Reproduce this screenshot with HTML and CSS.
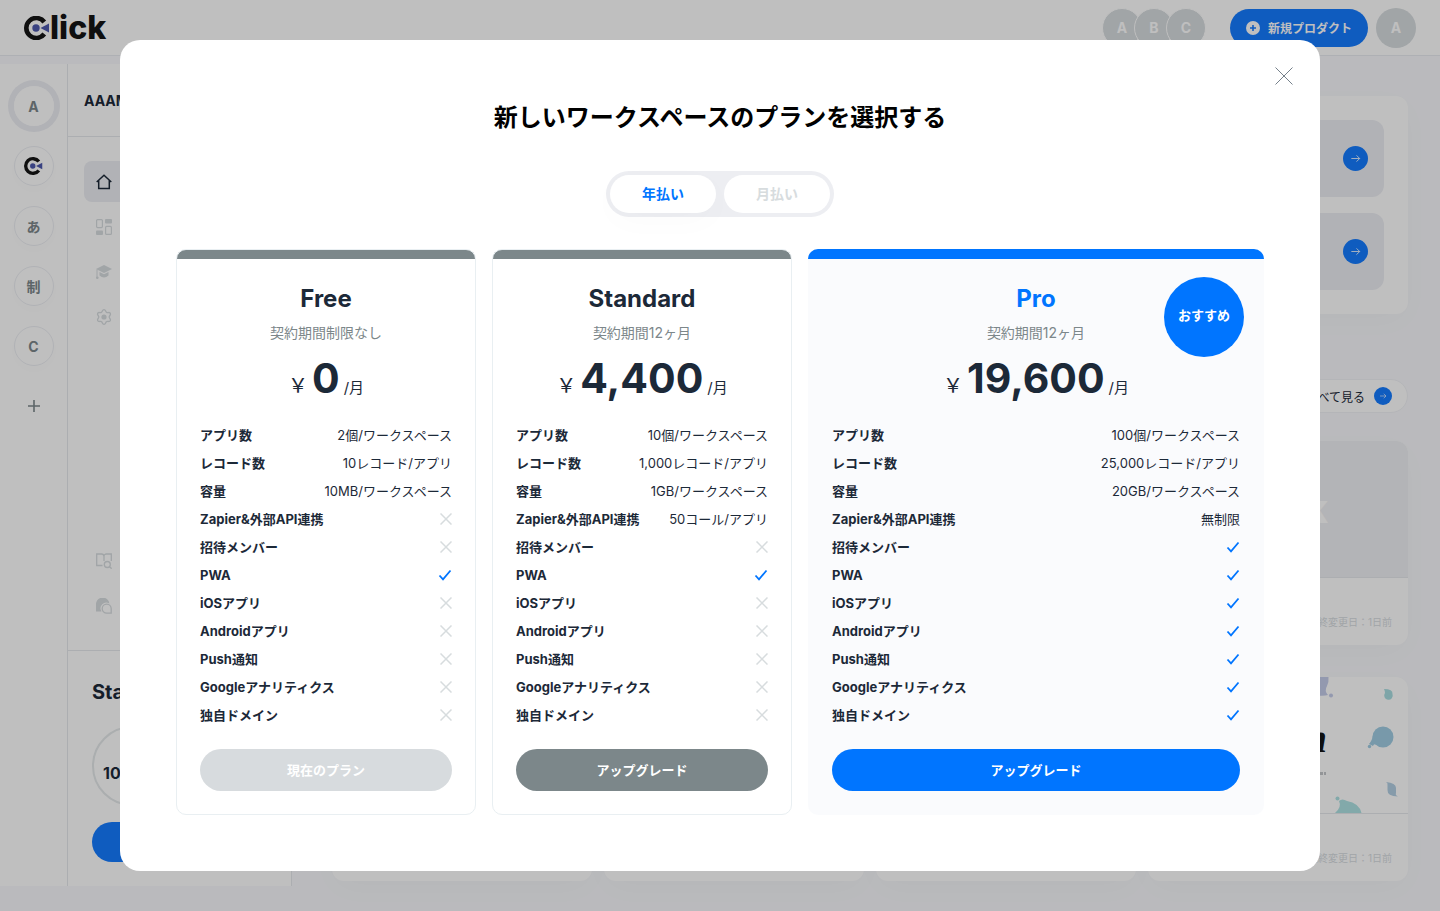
FILE: index.html
```html
<!DOCTYPE html>
<html lang="ja">

<head>
  <meta charset="UTF-8">
  <meta name="viewport" content="width=device-width, initial-scale=1.0">
  <title>Click</title>
  <link rel="stylesheet" href="styles.css">
</head>

<body>
  <!-- shared icons -->
  <svg class="sprite" aria-hidden="true">
    <symbol id="mark" viewBox="0 0 26 24">
      <path d="M20.3 6A10 10 0 1 0 20.3 18" fill="none" stroke="#141414" stroke-width="4.6"/>
      <circle cx="12" cy="12" r="3.7" fill="#4d58ad"/>
      <path d="M16.500 12L25 7.500V16.500Z" fill="#4d58ad"/>
    </symbol>
    <symbol id="arrow" viewBox="0 0 24 24">
      <path d="M8 12h8M13 9l3 3L13 15" fill="none" stroke="#fff" stroke-width=".8"/>
    </symbol>
    <symbol id="cross" viewBox="0 0 12 12">
      <path d="M.5.5l11 11M11.500.5l-11 11" fill="none" stroke="#d7dcde" stroke-width="1.5"/>
    </symbol>
    <symbol id="check" viewBox="0 0 14 12">
      <path d="M1.500 6.500L5 10.300 12.500 1.500" fill="none" stroke="#0075ff" stroke-width="1.8"/>
    </symbol>
  </svg>

  <div class="app">
    <header class="header">
      <a href="#" class="logo" aria-label="Click"><svg class="logo-mark"><use href="#mark"/></svg><span>lick</span></a>
      <div class="members">
        <span class="member">A</span>
        <span class="member">B</span>
        <span class="member">C</span>
      </div>
      <button type="button" class="new-product">
        <svg width="14" height="14" viewBox="0 0 14 14"><circle cx="7" cy="7" r="7" fill="#fff"/><path d="M7 4v6M4 7h6" stroke="#147bff" stroke-width="1.6"/></svg>
        新規プロダクト
      </button>
      <button type="button" class="account">A</button>
    </header>

    <div class="shell">
      <nav class="workspaces">
        <a href="#" class="workspace active">A</a>
        <a href="#" class="workspace" aria-label="Click"><svg width="19" height="18"><use href="#mark"/></svg></a>
        <a href="#" class="workspace">あ</a>
        <a href="#" class="workspace">制</a>
        <a href="#" class="workspace">C</a>
        <button type="button" class="workspace-add" aria-label="追加"><svg width="12" height="12" viewBox="0 0 12 12"><path d="M6 0v12M0 6h12" stroke="#7c878b" stroke-width="1.600"/></svg></button>
      </nav>

      <aside class="sidebar">
        <div class="sidebar-name">AAAM</div>
        <nav class="menu">
          <a href="#" class="menu-item active" aria-label="ホーム">
            <svg viewBox="0 0 16 16"><path d="M.7 8L8 1.300 15.300 8M2.700 6.500V14.600H13.300V6.500" fill="none" stroke="#1c2938" stroke-width="1.500"/></svg>
          </a>
          <a href="#" class="menu-item" aria-label="テンプレート">
            <svg viewBox="0 0 16 16" fill="#d7dcdf"><rect x=".6" y=".6" width="5.800" height="8" rx="1" fill="none" stroke="#d7dcdf" stroke-width="1.200"/><rect x="9" width="7" height="4.500" rx="1"/><rect x="9.600" y="7.400" width="5.800" height="8" rx="1" fill="none" stroke="#d7dcdf" stroke-width="1.200"/><rect y="11.500" width="7" height="4.500" rx="1"/></svg>
          </a>
          <a href="#" class="menu-item" aria-label="学習">
            <svg viewBox="0 0 16 16" fill="#d7dcdf"><path d="M8 1L16 5 8 9 0 5Z"/><path d="M3.500 8L8 10.200 12.500 8V11.500Q8 15.500 3.500 11.500Z"/><path d="M1 5.500V14" stroke="#d7dcdf"/><circle cx="1.300" cy="13.800" r="1.300"/></svg>
          </a>
          <a href="#" class="menu-item" aria-label="設定">
            <svg viewBox="0 0 16 16"><path d="M8 .7C9.800.7 9.400 2.800 10.600 3.400 11.800 4.100 13.400 2.700 14.300 4.300 15.200 5.900 13.200 6.600 13.200 8S15.200 10.100 14.300 11.700C13.400 13.300 11.800 11.900 10.600 12.600 9.400 13.200 9.800 15.300 8 15.300S6.600 13.200 5.400 12.600C4.200 11.900 2.600 13.300 1.700 11.700.8 10.100 2.800 9.400 2.800 8S.8 5.900 1.700 4.300C2.600 2.700 4.200 4.100 5.400 3.400 6.600 2.800 6.200.7 8 .7Z" fill="none" stroke="#d7dcdf" stroke-width="1.300"/><circle cx="8" cy="8" r="2.600" fill="#d7dcdf"/></svg>
          </a>
        </nav>
        <nav class="menu menu-help">
          <a href="#" class="menu-item" aria-label="マニュアル">
            <svg viewBox="0 0 16 16" fill="none" stroke="#d7dcdf" stroke-width="1.300"><path d="M6.500 12.500H.7V1H5.500Q8 1 8 3.500V8M8 3.500Q8 1 10.500 1H15.300V8"/><circle cx="11.300" cy="11.500" r="3"/><path d="M13.500 13.700L15.700 15.700"/></svg>
          </a>
          <a href="#" class="menu-item" aria-label="チャット">
            <svg viewBox="0 0 16 16"><path d="M0 13.500V7A6.700 6.700 0 0 1 13.400 5.600 5.700 5.700 0 0 0 5.500 13.500Z" fill="#d7dcdf"/><path d="M10.700 6.200A4.500 4.500 0 0 1 15.200 10.700V15.200H10.700A4.500 4.500 0 0 1 10.700 6.200Z" fill="none" stroke="#d7dcdf" stroke-width="1.300"/></svg>
          </a>
        </nav>
        <div class="usage">
          <div class="usage-plan">Standard</div>
          <div class="usage-ring">10</div>
          <button type="button" class="usage-button" aria-label="アップグレード"></button>
        </div>
      </aside>

      <main class="main">
        <section class="guide">
          <a href="#" class="guide-item" aria-label="ガイド"><svg class="dot"><use href="#arrow"/></svg></a>
          <a href="#" class="guide-item" aria-label="ガイド"><svg class="dot"><use href="#arrow"/></svg></a>
        </section>
        <a href="#" class="see-all">すべて見る<svg class="dot dot-small"><use href="#arrow"/></svg></a>
        <div class="products">
          <article class="product"></article>
          <article class="product"></article>
          <article class="product"></article>
          <article class="product">
            <div class="cover cover-gray">Click</div>
            <p>最終変更日：1日前</p>
          </article>
          <article class="product"></article>
          <article class="product"></article>
          <article class="product"></article>
          <article class="product">
            <div class="cover cover-art">
              <span class="art-name">n</span>
              <svg class="art" viewBox="0 0 260 136" aria-hidden="true">
                <path d="M160 0H180.500Q181 5 179 9 176 14 180 18 174 20 160 17Z" fill="#c5ccea"/>
                <circle cx="183" cy="18.500" r="2" fill="#c5ccea"/>
                <path d="M236 12Q245 12 244.500 17A4.300 4.300 0 1 1 237 16Q237 14 236 12Z" fill="#a9dde0"/>
                <circle cx="235" cy="60" r="10.500" fill="#a0cde3"/>
                <path d="M225 58Q224 64 221 67L225 69Q226 65 232 70Z" fill="#a0cde3"/>
                <circle cx="221.500" cy="69.500" r="1.700" fill="#a0cde3"/>
                <path d="M238 105Q248 106 248 111V116Q247 118 250 119.500 239 119 239.500 113V108Q240 106 238 105Z" fill="#b3cfe3"/>
                <path d="M187 136Q194 130 191 124 194 121 199 124 211 126 213.500 136Z" fill="#aee2e3"/>
                <circle cx="189.500" cy="121.500" r="2" fill="#aee2e3"/>
                <path d="M172 95v3M174 95v3M177 95v3" stroke="#8a8f96"/>
              </svg>
            </div>
            <p>最終変更日：1日前</p>
          </article>
        </div>
      </main>
    </div>
  </div>

  <div class="overlay">
    <div class="modal" role="dialog" aria-modal="true" aria-labelledby="modal-title">
      <button type="button" class="close" aria-label="閉じる">
        <svg width="18" height="18" viewBox="0 0 18 18"><path d="M.5.5l17 17M17.500.5l-17 17" stroke="#75808a" stroke-width="1"/></svg>
      </button>
      <h1 id="modal-title">新しいワークスペースのプランを選択する</h1>
      <div class="billing">
        <button type="button" class="selected" aria-pressed="true">年払い</button>
        <button type="button" aria-pressed="false">月払い</button>
      </div>

      <div class="plans">
        <section class="plan">
          <h2>Free</h2>
          <p class="term">契約期間制限なし</p>
          <p class="price"><span class="yen">￥</span><strong>0</strong><span class="per">/月</span></p>
          <table class="features">
            <tr><th scope="row">アプリ数</th><td>2個/ワークスペース</td></tr>
            <tr><th scope="row">レコード数</th><td>10レコード/アプリ</td></tr>
            <tr><th scope="row">容量</th><td>10MB/ワークスペース</td></tr>
            <tr><th scope="row">Zapier&amp;外部API連携</th><td><svg class="no"><use href="#cross"/></svg></td></tr>
            <tr><th scope="row">招待メンバー</th><td><svg class="no"><use href="#cross"/></svg></td></tr>
            <tr><th scope="row">PWA</th><td><svg class="yes"><use href="#check"/></svg></td></tr>
            <tr><th scope="row">iOSアプリ</th><td><svg class="no"><use href="#cross"/></svg></td></tr>
            <tr><th scope="row">Androidアプリ</th><td><svg class="no"><use href="#cross"/></svg></td></tr>
            <tr><th scope="row">Push通知</th><td><svg class="no"><use href="#cross"/></svg></td></tr>
            <tr><th scope="row">Googleアナリティクス</th><td><svg class="no"><use href="#cross"/></svg></td></tr>
            <tr><th scope="row">独自ドメイン</th><td><svg class="no"><use href="#cross"/></svg></td></tr>
          </table>
          <button type="button" class="plan-button" disabled>現在のプラン</button>
        </section>

        <section class="plan">
          <h2>Standard</h2>
          <p class="term">契約期間12ヶ月</p>
          <p class="price"><span class="yen">￥</span><strong>4,400</strong><span class="per">/月</span></p>
          <table class="features">
            <tr><th scope="row">アプリ数</th><td>10個/ワークスペース</td></tr>
            <tr><th scope="row">レコード数</th><td>1,000レコード/アプリ</td></tr>
            <tr><th scope="row">容量</th><td>1GB/ワークスペース</td></tr>
            <tr><th scope="row">Zapier&amp;外部API連携</th><td>50コール/アプリ</td></tr>
            <tr><th scope="row">招待メンバー</th><td><svg class="no"><use href="#cross"/></svg></td></tr>
            <tr><th scope="row">PWA</th><td><svg class="yes"><use href="#check"/></svg></td></tr>
            <tr><th scope="row">iOSアプリ</th><td><svg class="no"><use href="#cross"/></svg></td></tr>
            <tr><th scope="row">Androidアプリ</th><td><svg class="no"><use href="#cross"/></svg></td></tr>
            <tr><th scope="row">Push通知</th><td><svg class="no"><use href="#cross"/></svg></td></tr>
            <tr><th scope="row">Googleアナリティクス</th><td><svg class="no"><use href="#cross"/></svg></td></tr>
            <tr><th scope="row">独自ドメイン</th><td><svg class="no"><use href="#cross"/></svg></td></tr>
          </table>
          <button type="button" class="plan-button">アップグレード</button>
        </section>

        <section class="plan pro">
          <span class="badge">おすすめ</span>
          <h2>Pro</h2>
          <p class="term">契約期間12ヶ月</p>
          <p class="price"><span class="yen">￥</span><strong>19,600</strong><span class="per">/月</span></p>
          <table class="features">
            <tr><th scope="row">アプリ数</th><td>100個/ワークスペース</td></tr>
            <tr><th scope="row">レコード数</th><td>25,000レコード/アプリ</td></tr>
            <tr><th scope="row">容量</th><td>20GB/ワークスペース</td></tr>
            <tr><th scope="row">Zapier&amp;外部API連携</th><td>無制限</td></tr>
            <tr><th scope="row">招待メンバー</th><td><svg class="yes"><use href="#check"/></svg></td></tr>
            <tr><th scope="row">PWA</th><td><svg class="yes"><use href="#check"/></svg></td></tr>
            <tr><th scope="row">iOSアプリ</th><td><svg class="yes"><use href="#check"/></svg></td></tr>
            <tr><th scope="row">Androidアプリ</th><td><svg class="yes"><use href="#check"/></svg></td></tr>
            <tr><th scope="row">Push通知</th><td><svg class="yes"><use href="#check"/></svg></td></tr>
            <tr><th scope="row">Googleアナリティクス</th><td><svg class="yes"><use href="#check"/></svg></td></tr>
            <tr><th scope="row">独自ドメイン</th><td><svg class="yes"><use href="#check"/></svg></td></tr>
          </table>
          <button type="button" class="plan-button">アップグレード</button>
        </section>
      </div>
    </div>
  </div>
</body>

</html>
```
FILE: styles.css
```css
* {
  margin: 0;
  padding: 0;
  box-sizing: border-box;
}

body {
  background: #f8f9fc;
  color: #1c2938;
  font-family: Inter, "Noto Sans CJK JP", sans-serif;
  font-size: 13px;
}

button {
  border: 0;
  background: none;
  font: inherit;
  color: inherit;
  cursor: pointer;
}

a {
  color: inherit;
  text-decoration: none;
}

svg {
  display: block;
  flex: none;
}

.sprite {
  position: absolute;
  width: 0;
  height: 0;
}

/* page behind the dialog */
.app {
  display: flex;
  flex-direction: column;
  height: 100vh;
  overflow: hidden;
}

.header {
  display: flex;
  align-items: center;
  flex: none;
  height: 56px;
  padding: 0 24px;
  background: #fff;
  border-bottom: 1px solid #e9ebf0;
}

.logo {
  display: flex;
  align-items: center;
  margin-right: auto;
  color: #141414;
  font-size: 32px;
  line-height: 32px;
  font-weight: 800;
}

.logo-mark {
  width: 26px;
  height: 24px;
}

.members {
  display: flex;
  margin-right: 24px;
}

.member,
.account {
  display: flex;
  align-items: center;
  justify-content: center;
  border-radius: 50%;
  background: #d7dcdf;
  color: #fff;
  font-size: 14px;
  font-weight: 700;
}

.member {
  width: 40px;
  height: 40px;
  border: 1px solid #fff;
}

.member + .member {
  margin-left: -8px;
}

.new-product {
  display: flex;
  align-items: center;
  gap: 8px;
  height: 38px;
  padding: 0 16px;
  margin-right: 8px;
  border-radius: 19px;
  background: #147bff;
  color: #fff;
  font-size: 12px;
  font-weight: 700;
}

.account {
  width: 40px;
  height: 40px;
}

.shell {
  display: flex;
  flex: 1;
  min-height: 0;
  padding: 8px 0 25px;
}

.workspaces {
  display: flex;
  flex-direction: column;
  align-items: center;
  gap: 20px;
  width: 68px;
  padding-top: 22px;
  background: #fff;
  border-right: 1px solid #e6e9ed;
}

.workspace,
.workspace-add {
  display: flex;
  align-items: center;
  justify-content: center;
  width: 40px;
  height: 40px;
  border-radius: 50%;
  color: #7c878b;
  font-size: 14px;
  font-weight: 700;
}

.workspace {
  border: 1px solid #eceef3;
  box-shadow: 0 4px 20px rgba(20, 30, 60, 0.01);
}

.workspace.active {
  border-color: #fff;
  box-shadow: 0 0 0 6px #edeef3;
}

.sidebar {
  display: flex;
  flex-direction: column;
  width: 224px;
  background: #fff;
  border-right: 1px solid #e6e9ed;
}

.sidebar-name {
  height: 73px;
  padding: 0 16px;
  border-bottom: 1px solid #e6e9ed;
  font-size: 14px;
  line-height: 74px;
  font-weight: 700;
}

.menu {
  display: flex;
  flex-direction: column;
  gap: 4px;
  padding: 24px 16px;
}

.menu-item {
  display: flex;
  align-items: center;
  height: 41px;
  padding: 0 12px;
  border-radius: 8px;
}

.menu-item.active {
  background: #edeef3;
}

.menu-item svg {
  width: 16px;
  height: 16px;
}

.menu-help {
  margin-top: auto;
}

.usage {
  padding: 24px;
  border-top: 1px solid #e6e9ed;
}

.usage-plan {
  font-size: 20px;
  line-height: 35px;
  font-weight: 700;
}

.usage-ring {
  width: 80px;
  height: 80px;
  margin: 16px 0;
  padding-left: 9px;
  border: 2px solid #e4e8ea;
  border-radius: 50%;
  font-size: 16px;
  line-height: 90px;
  font-weight: 700;
}

.usage-button {
  display: block;
  width: 100%;
  height: 40px;
  border-radius: 20px;
  background: #147bff;
}

.main {
  display: flex;
  flex-direction: column;
  flex: 1;
  padding: 32px 32px 0 40px;
}

.guide {
  display: flex;
  flex-direction: column;
  gap: 16px;
  padding: 24px;
  border-radius: 12px;
  background: #fff;
  box-shadow: 0 8px 32px rgba(20, 30, 60, 0.02);
}

.guide-item {
  display: flex;
  align-items: center;
  justify-content: flex-end;
  height: 77px;
  padding: 0 16px;
  border-radius: 12px;
  background: #edeef3;
}

.dot {
  width: 25px;
  height: 25px;
  border-radius: 50%;
  background: #147bff;
}

.dot-small {
  width: 18px;
  height: 18px;
}

.see-all {
  display: flex;
  align-items: center;
  align-self: flex-end;
  gap: 9px;
  height: 34px;
  margin: 65px 0 28px;
  padding: 0 15px;
  border: 1px solid #f1f2f6;
  border-radius: 17px;
  background: #fff;
  font-size: 12px;
}

.products {
  display: grid;
  grid-template-columns: repeat(4, 1fr);
  gap: 32px 12px;
}

.product {
  height: 204px;
  border-radius: 12px;
  background: #fff;
  box-shadow: 0 8px 32px rgba(20, 30, 60, 0.02);
  overflow: hidden;
}

.product p {
  padding: 36px 16px 0;
  color: #d7dcdf;
  font-size: 10px;
  line-height: 16px;
  text-align: right;
}

.cover {
  position: relative;
  height: 137px;
  border-bottom: 1px solid #e6e9ed;
}

.cover-gray {
  background: #eff1f4;
  color: #fff;
  font-size: 40px;
  line-height: 136px;
  font-weight: 800;
  text-align: center;
}

.art-name {
  display: block;
  padding-right: 81px;
  color: #141414;
  font-family: "Liberation Serif", serif;
  font-size: 40px;
  line-height: 124px;
  font-weight: 700;
  font-style: italic;
  text-align: right;
}

.art {
  position: absolute;
  inset: 0;
  width: 100%;
  height: 100%;
}

/* dialog */
.overlay {
  position: fixed;
  inset: 0;
  padding: 40px 120px;
  background: rgba(0, 0, 0, 0.25);
  overflow: auto;
}

.modal {
  position: relative;
  max-width: 1200px;
  margin: 0 auto;
  padding: 56px;
  border-radius: 20px;
  background: #fff;
}

.close {
  position: absolute;
  top: 27px;
  right: 27px;
}

.modal h1 {
  color: #000;
  font-size: 24px;
  line-height: 43px;
  font-weight: 700;
  text-align: center;
  margin-bottom: 32px;
}

.billing {
  display: flex;
  gap: 8px;
  width: fit-content;
  margin: 0 auto 32px;
  padding: 4px;
  border-radius: 23px;
  background: #edeef2;
}

.billing button {
  width: 106px;
  height: 38px;
  padding-bottom: 2px;
  border-radius: 19px;
  background: #fff;
  color: #d7dcde;
  font-size: 14px;
  font-weight: 700;
}

.billing .selected {
  color: #0075ff;
  box-shadow: 0 8px 32px rgba(20, 30, 60, 0.02);
}

.plans {
  display: grid;
  grid-template-columns: 300fr 300fr 456fr;
  gap: 16px;
}

.plan {
  position: relative;
  padding: 33px 23px 23px;
  border: 1px solid #e9eff2;
  border-radius: 10px;
  background: linear-gradient(#7c878a 9px, #fff 9px);
  text-align: center;
}

.plan.pro {
  padding: 34px 24px 24px;
  border: 0;
  background: linear-gradient(#0075ff 10px, #fafbfd 10px);
}

.plan h2 {
  font-size: 24px;
  line-height: 32px;
  font-weight: 700;
}

.pro h2 {
  color: #0075ff;
}

.term {
  margin: 6px 0 8px;
  color: #7c878a;
  font-size: 14px;
  line-height: 24px;
}

.price {
  display: flex;
  align-items: baseline;
  justify-content: center;
  gap: 4px;
  height: 52px;
  margin-bottom: 16px;
  line-height: 50px;
}

.price .yen {
  font-size: 20px;
}

.price strong {
  font-size: 41px;
}

.price .per {
  font-size: 15px;
}

.features,
.features tbody {
  display: block;
}

.features {
  margin-bottom: 20px;
}

.features tr {
  display: flex;
  align-items: center;
  justify-content: space-between;
  height: 28px;
  line-height: 20px;
  white-space: nowrap;
}

.features th {
  font-weight: 700;
}

.no {
  width: 12px;
  height: 12px;
}

.yes {
  width: 14px;
  height: 12px;
}

.plan-button {
  width: 100%;
  height: 42px;
  padding-bottom: 2px;
  border-radius: 21px;
  background: #7c878a;
  color: #fff;
  font-weight: 700;
}

.plan-button:disabled {
  background: #d7dbde;
  cursor: default;
}

.pro .plan-button {
  background: #0075ff;
}

.badge {
  position: absolute;
  top: 28px;
  right: 20px;
  width: 80px;
  height: 80px;
  border-radius: 50%;
  background: #0075ff;
  color: #fff;
  font-weight: 700;
  line-height: 76px;
}
```
